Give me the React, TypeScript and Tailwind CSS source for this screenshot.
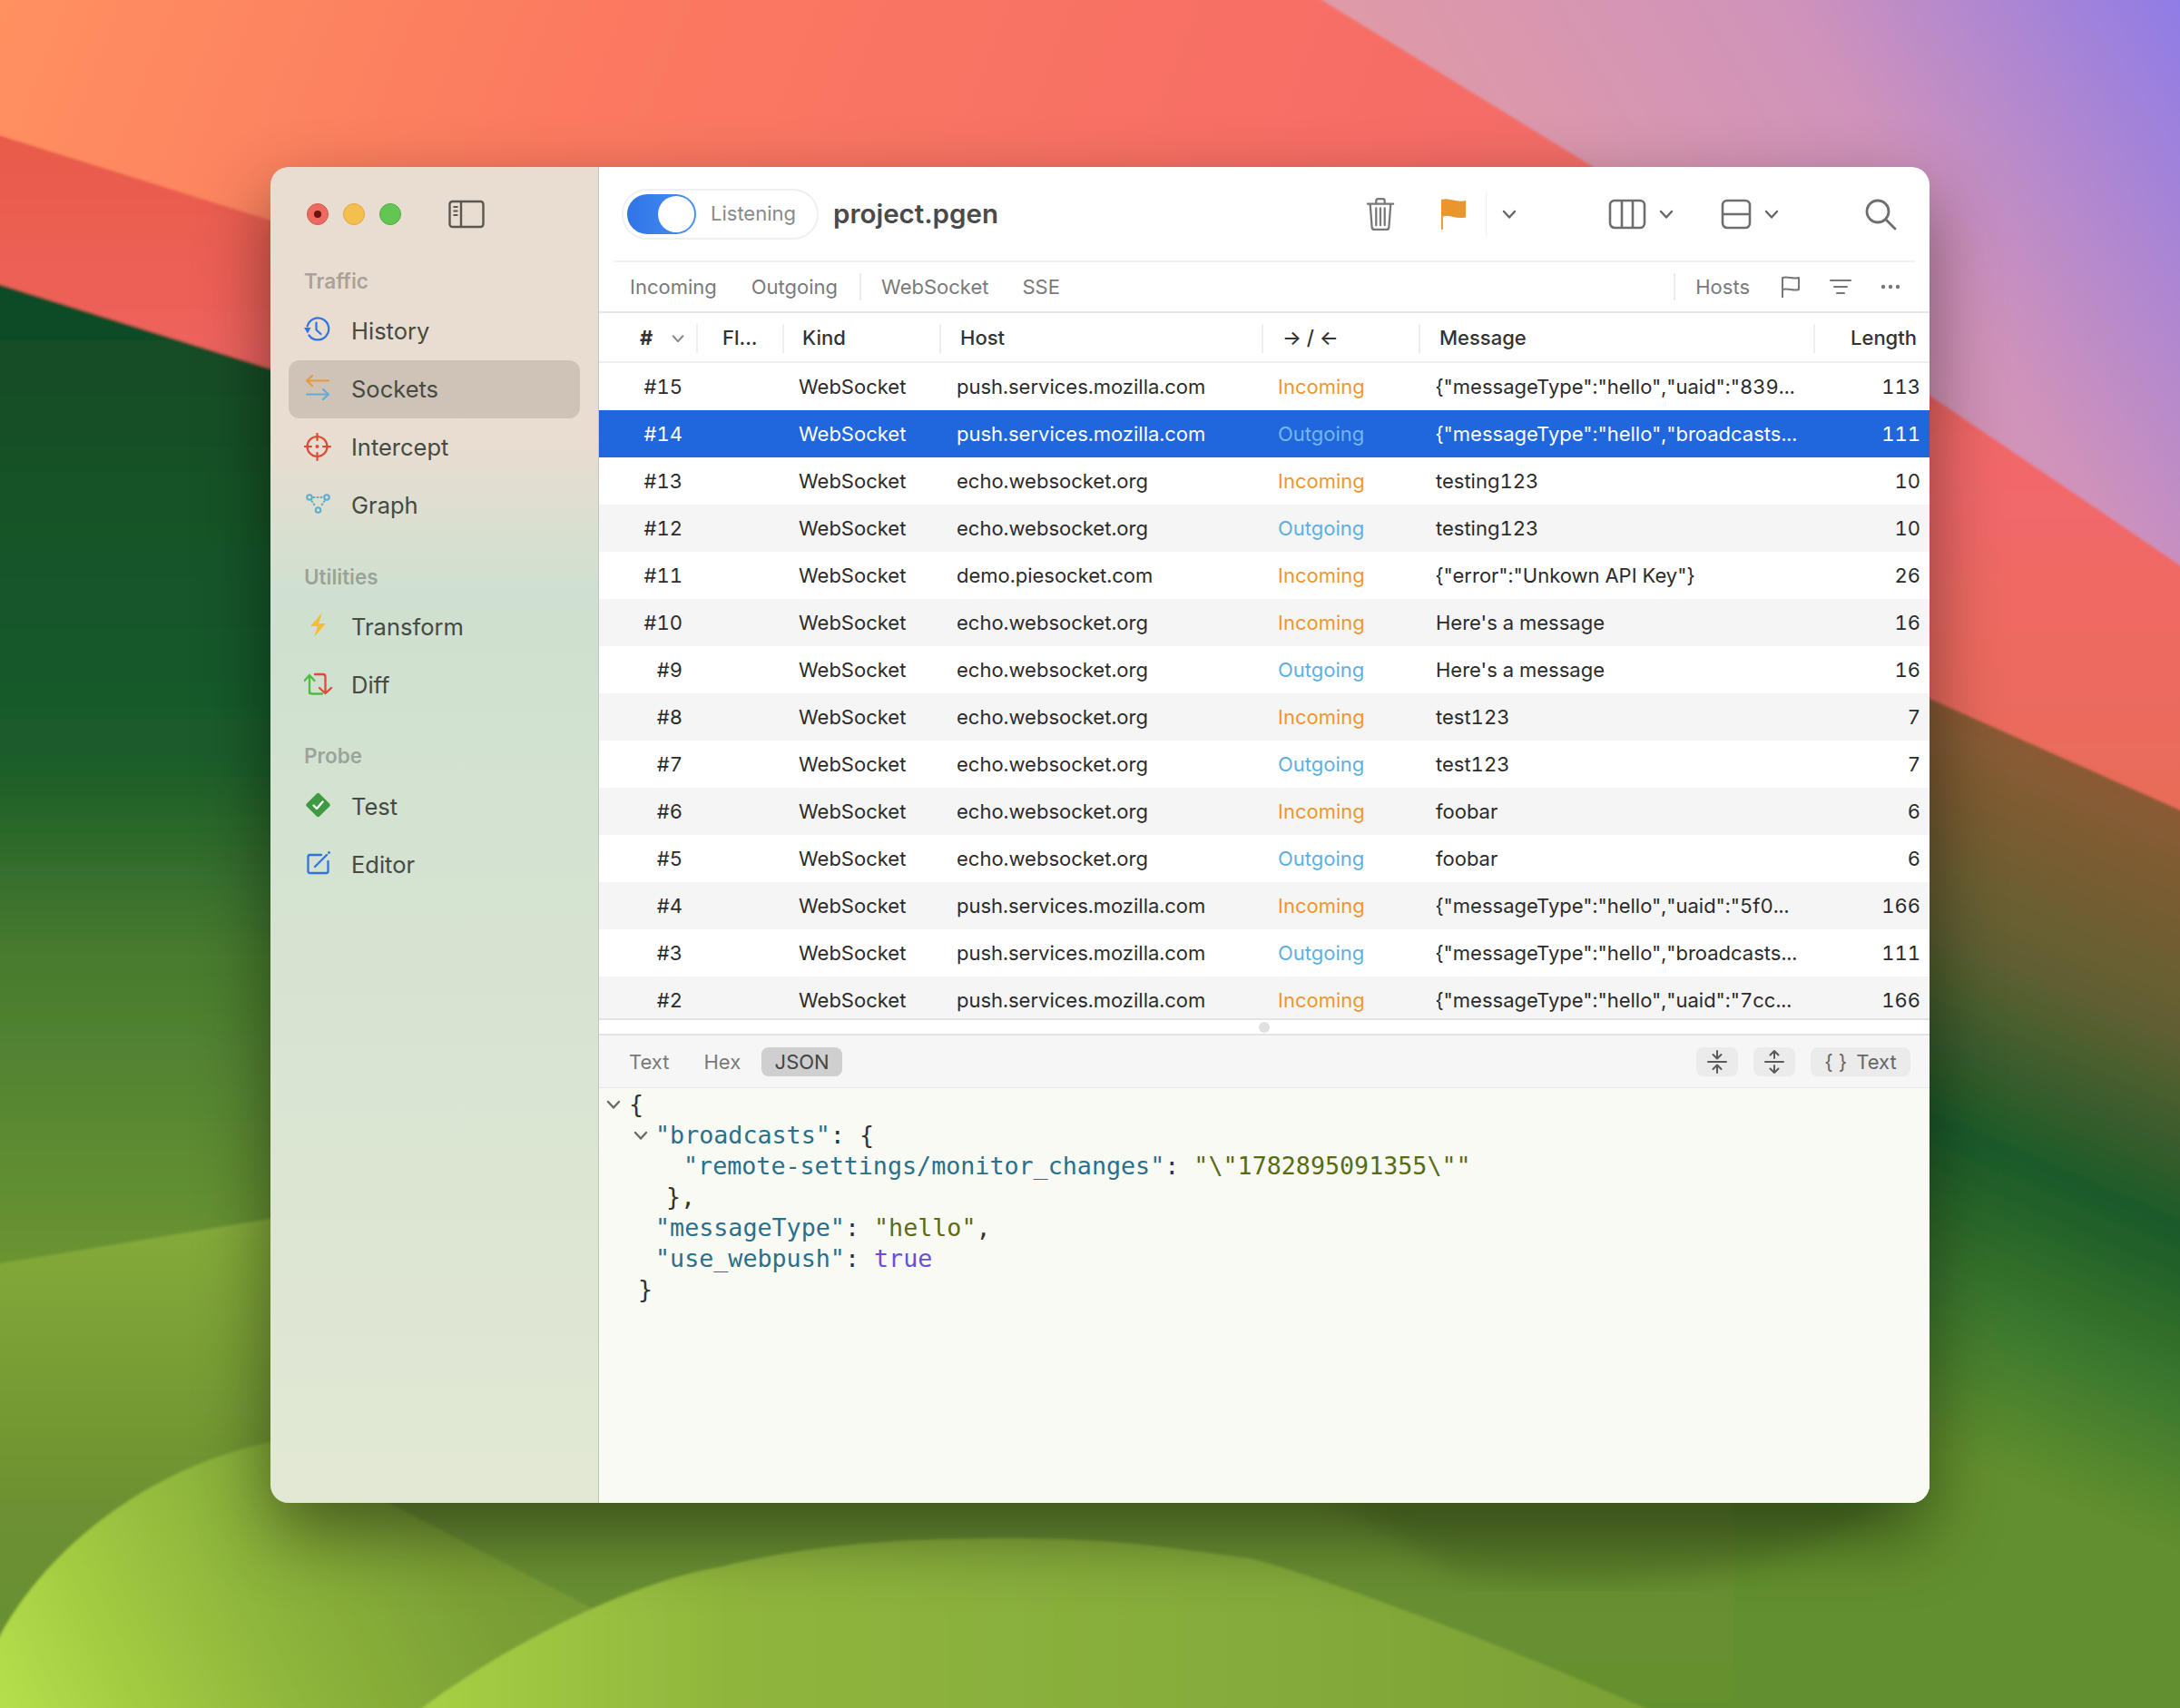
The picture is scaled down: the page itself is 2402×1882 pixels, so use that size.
import type { ReactNode } from "react"

const rows = [
  ["#15", "push.services.mozilla.com", "Incoming", '{"messageType":"hello","uaid":"839...', "113"],
  ["#14", "push.services.mozilla.com", "Outgoing", '{"messageType":"hello","broadcasts...', "111"],
  ["#13", "echo.websocket.org", "Incoming", "testing123", "10"],
  ["#12", "echo.websocket.org", "Outgoing", "testing123", "10"],
  ["#11", "demo.piesocket.com", "Incoming", '{"error":"Unkown API Key"}', "26"],
  ["#10", "echo.websocket.org", "Incoming", "Here's a message", "16"],
  ["#9", "echo.websocket.org", "Outgoing", "Here's a message", "16"],
  ["#8", "echo.websocket.org", "Incoming", "test123", "7"],
  ["#7", "echo.websocket.org", "Outgoing", "test123", "7"],
  ["#6", "echo.websocket.org", "Incoming", "foobar", "6"],
  ["#5", "echo.websocket.org", "Outgoing", "foobar", "6"],
  ["#4", "push.services.mozilla.com", "Incoming", '{"messageType":"hello","uaid":"5f0...', "166"],
  ["#3", "push.services.mozilla.com", "Outgoing", '{"messageType":"hello","broadcasts...', "111"],
  ["#2", "push.services.mozilla.com", "Incoming", '{"messageType":"hello","uaid":"7cc...', "166"],
]

function Wallpaper() {
  return (
    <svg className="absolute inset-0" width="2402" height="1882" viewBox="0 0 2402 1882">
      <defs>
        <linearGradient id="sky" x1="0" y1="0" x2="1" y2="0.3">
          <stop offset="0" stopColor="#ff9060" />
          <stop offset="0.25" stopColor="#fb7a60" />
          <stop offset="0.6" stopColor="#f66d66" />
          <stop offset="1" stopColor="#ec6a6c" />
        </linearGradient>
        <linearGradient id="pink" gradientUnits="userSpaceOnUse" x1="1700" y1="420" x2="2402" y2="0">
          <stop offset="0" stopColor="#e09aa6" />
          <stop offset="0.55" stopColor="#cf92ba" />
          <stop offset="1" stopColor="#8f7ce6" />
        </linearGradient>
        <linearGradient id="redBand" gradientUnits="userSpaceOnUse" x1="0" y1="150" x2="0" y2="890">
          <stop offset="0" stopColor="#e85a48" />
          <stop offset="0.5" stopColor="#f2686a" />
          <stop offset="1" stopColor="#e86c58" />
        </linearGradient>
        <linearGradient id="leftGreen" gradientUnits="userSpaceOnUse" x1="0" y1="312" x2="0" y2="1392">
          <stop offset="0" stopColor="#104a26" />
          <stop offset="0.48" stopColor="#1a5c2a" />
          <stop offset="0.68" stopColor="#477a2e" />
          <stop offset="1" stopColor="#6a9433" />
        </linearGradient>
        <linearGradient id="rightGreen" gradientUnits="userSpaceOnUse" x1="2250" y1="830" x2="1950" y2="1520">
          <stop offset="0" stopColor="#8a5a34" />
          <stop offset="0.3" stopColor="#5f5f30" />
          <stop offset="0.56" stopColor="#1b5a2a" />
          <stop offset="0.8" stopColor="#3f7a2d" />
          <stop offset="1" stopColor="#64902f" />
        </linearGradient>
        <linearGradient id="hillA" gradientUnits="userSpaceOnUse" x1="0" y1="1343" x2="0" y2="1882">
          <stop offset="0" stopColor="#85ab3a" />
          <stop offset="0.6" stopColor="#6c9030" />
          <stop offset="1" stopColor="#64902f" />
        </linearGradient>
        <linearGradient id="hillB" gradientUnits="userSpaceOnUse" x1="0" y1="1882" x2="800" y2="1500">
          <stop offset="0" stopColor="#b5e04c" />
          <stop offset="0.15" stopColor="#a4cc42" />
          <stop offset="0.35" stopColor="#8db43b" />
          <stop offset="0.6" stopColor="#7b9f35" />
          <stop offset="1" stopColor="#6e9130" />
        </linearGradient>
        <linearGradient id="hillC" gradientUnits="userSpaceOnUse" x1="455" y1="0" x2="1830" y2="0">
          <stop offset="0" stopColor="#a8d044" />
          <stop offset="0.25" stopColor="#90b53d" />
          <stop offset="0.7" stopColor="#84aa3a" />
          <stop offset="1" stopColor="#7aa035" />
        </linearGradient>
        <filter id="soft">
          <feGaussianBlur stdDeviation="1.500" />
        </filter>
        <filter id="softer">
          <feGaussianBlur stdDeviation="14" />
        </filter>
      </defs>
      <rect width="2402" height="1882" fill="url(#sky)" />
      <g filter="url(#soft)">
        <path d="M-5 148 L800 400 L2410 400 L2410 900 L-5 900 Z" fill="url(#redBand)" />
        <path d="M1448 -5 L1754 183 L2410 628 L2410 -5 Z" fill="url(#pink)" />
        <path d="M1900 669 L2410 896 L2410 1890 L1900 1890 Z" fill="url(#rightGreen)" />
        <path d="M-5 312 L310 410 L800 800 L800 1500 L-5 1500 Z" fill="url(#leftGreen)" />
        <path d="M-5 1393 L298 1343 L1910 1343 L1910 1890 L-5 1890 Z" fill="url(#hillA)" />
        <path d="M-5 1812 C40 1720 150 1620 298 1589 L900 1900 L-5 1900 Z" fill="url(#hillB)" />
      </g>
      <path d="M1463 1650 L1608 1735 C1800 1760 2000 1730 2080 1650 Z" fill="#4a6a24" opacity="0.45" filter="url(#softer)" />
      <path
        d="M455 1890 C530 1830 680 1745 796 1726 C900 1700 1000 1695 1118 1695 C1240 1695 1320 1710 1378 1717 C1480 1745 1700 1830 1830 1890 Z"
        fill="url(#hillC)"
        filter="url(#soft)"
      />
    </svg>
  )
}

function Ic({ children }: { children: ReactNode }) {
  return (
    <svg width={32} height={32} viewBox="0 0 32 32" fill="none" strokeLinecap="round" strokeLinejoin="round" className="shrink-0">
      {children}
    </svg>
  )
}

function NavIcon({ name }: { name: string }) {
  if (name === "History")
    return (
      <Ic>
        <g stroke="#2f74e0" strokeWidth="2.200">
          <path d="M3.600 10.500A12 12 0 1 1 5.500 20.500" />
          <path d="M13.500 6.500v8l5 4.500" />
        </g>
        <path d="M0 12h7.500L4 18.500Z" fill="#2f74e0" />
      </Ic>
    )
  if (name === "Sockets")
    return (
      <Ic>
        <path d="M27 6.500H3M9 1 3 6.500 9 12" stroke="#e8983e" strokeWidth="2.200" />
        <path d="M3 21.500h24M21 16l6 5.500-6 5.500" stroke="#62add8" strokeWidth="2.200" />
      </Ic>
    )
  if (name === "Intercept")
    return (
      <Ic>
        <g stroke="#df4a35" strokeWidth="2.200">
          <circle cx="14.500" cy="15" r="11" />
          <path d="M14.500 0v8M14.500 22v8M0 15h8M21 15h8" />
        </g>
        <circle cx="14.500" cy="15" r="2" fill="#df4a35" />
      </Ic>
    )
  if (name === "Graph")
    return (
      <Ic>
        <g stroke="#5cadc9" strokeWidth="2">
          <circle cx="6" cy="7" r="2.800" />
          <circle cx="25" cy="7" r="2.800" />
          <circle cx="15.500" cy="21" r="2.800" />
          <path d="M10.500 7h10M8.500 11l4 6M22.500 11l-4 6" strokeDasharray="1 3" />
        </g>
      </Ic>
    )
  if (name === "Transform")
    return (
      <Ic>
        <path d="M20 0 7 15h8l-4 12 13-15h-8l4-12Z" fill="#f5bd33" />
      </Ic>
    )
  if (name === "Diff")
    return (
      <Ic>
        <path d="M6 25V5M.5 11 6 5l5.500 6M6 22c0 2 1 3.500 3 3.500h11" stroke="#4fbb44" strokeWidth="2.300" />
        <path d="M12 4h9c2 0 2.500 1 2.500 3v17M17 19l6.500 6 6.500-6" stroke="#df4a35" strokeWidth="2.300" />
      </Ic>
    )
  if (name === "Test")
    return (
      <Ic>
        <rect x="5.500" y="4" width="20" height="20" rx="2.500" fill="#3e9a40" transform="rotate(45 15.500 14)" />
        <path d="m10.500 14.500 3.500 3.500 6.500-7.500" stroke="#fff" strokeWidth="2.400" />
      </Ic>
    )
  return (
    <Ic>
      <path d="M19 5H6.500a2 2 0 0 0-2 2v16a2 2 0 0 0 2 2h18a2 2 0 0 0 2-2V12" stroke="#2f74e0" strokeWidth="2.300" />
      <path d="m12 18 13-13" stroke="#2f74e0" strokeWidth="2.300" />
      <circle cx="27.500" cy="2.500" r="1.400" fill="#2f74e0" />
    </Ic>
  )
}

function NavItem({ label, active }: { label: string; active?: boolean }) {
  return (
    <div className={"flex items-center h-[64px] pl-[17px] rounded-[12px] " + (active ? "bg-[#cfc3b8]" : "")}>
      <div className="w-[52px] shrink-0">
        <NavIcon name={label} />
      </div>
      <span className="text-[25.500px] leading-none text-[#454a42]">{label}</span>
    </div>
  )
}

function SectionLabel({ children, cls }: { children: ReactNode; cls: string }) {
  return <div className={"pl-[17px] text-[22.500px] leading-none font-semibold text-[#3f3f3f]/40 " + cls}>{children}</div>
}

function Sidebar() {
  return (
    <aside className="w-[362px] shrink-0 flex flex-col bg-gradient-to-b from-[#e9ddd1] from-[20%] via-[#cfe0d0] via-[32%] to-[#e2e8d4] border-r border-[#bcc8b8] px-[20px]">
      <div className="flex items-center h-[104px] pl-[20px]">
        <span className="flex items-center justify-center w-[24px] h-[24px] rounded-full bg-[#ec6a5f] border border-[#d55a4e]">
          <span className="w-[8px] h-[8px] rounded-full bg-[#6e1410]" />
        </span>
        <span className="w-[24px] h-[24px] rounded-full bg-[#f5bf4f] border border-[#dfa93c] ml-[16px]" />
        <span className="w-[24px] h-[24px] rounded-full bg-[#62c554] border border-[#4fae43] ml-[16px]" />
        <svg width="40" height="32" viewBox="0 0 40 32" fill="none" className="ml-[52px]">
          <rect x="1.500" y="2" width="37" height="28" rx="3" stroke="#5a5650" strokeWidth="2.400" />
          <path d="M14 2v28" stroke="#5a5650" strokeWidth="2.400" />
          <path d="M5.500 8h5M5.500 12.500h5M5.500 17h5" stroke="#5a5650" strokeWidth="2" />
        </svg>
      </div>
      <SectionLabel cls="mt-[11px] mb-[11px]">Traffic</SectionLabel>
      <NavItem label="History" />
      <NavItem label="Sockets" active />
      <NavItem label="Intercept" />
      <NavItem label="Graph" />
      <SectionLabel cls="mt-[36px] mb-[12px]">Utilities</SectionLabel>
      <NavItem label="Transform" />
      <NavItem label="Diff" />
      <SectionLabel cls="mt-[35px] mb-[12px]">Probe</SectionLabel>
      <NavItem label="Test" />
      <NavItem label="Editor" />
    </aside>
  )
}

function Chevron({ color = "#666", size = 18, cls = "" }: { color?: string; size?: number; cls?: string }) {
  return (
    <svg width={size} height={size} viewBox="0 0 18 18" fill="none" className={cls}>
      <path d="m3 6 6 6.500L15 6" stroke={color} strokeWidth="2.400" strokeLinecap="round" strokeLinejoin="round" />
    </svg>
  )
}

function Toolbar() {
  return (
    <div className="relative h-[105px] shrink-0 flex items-center pl-[25px] pr-[36px] pb-[2px]">
      <div className="flex items-center w-[217px] h-[56px] rounded-full border-2 border-[#efefef] pl-[4px]">
        <div className="flex items-center justify-end w-[76px] h-[44px] rounded-full bg-gradient-to-r from-[#2f74e6] to-[#4a90f5] p-[2px]">
          <span className="w-[40px] h-[40px] rounded-full bg-white" />
        </div>
        <span className="ml-[16px] text-[22px] text-[#8a8a8a]">Listening</span>
      </div>
      <span className="ml-[16px] text-[29.500px] font-semibold text-[#4a4a4a]">project.pgen</span>
      <div className="ml-auto flex items-center">
        <svg width="32" height="38" viewBox="0 0 34 40" fill="none" stroke="#777" strokeWidth="2.400" strokeLinecap="round" strokeLinejoin="round">
          <path d="M2 8h30M12 8V4.500C12 3 13 2 14.500 2h5C21 2 22 3 22 4.500V8M5 8l2 27c.1 1.800 1.200 3 3 3h14c1.800 0 2.900-1.200 3-3l2-27M12 13v20M17 13v20M22 13v20" />
        </svg>
        <svg width="31" height="37" viewBox="0 0 32 38" fill="none" className="ml-[49px]">
          <path d="M2 3c10-3 17 4 28 1v19c-11 3-18-4-26-1v15H2Z" fill="#ea962e" />
        </svg>
        <span className="ml-[20px] w-[1px] h-[50px] bg-[#f0f0f0]" />
        <Chevron cls="ml-[16px]" />
        <svg width="42" height="36" viewBox="0 0 42 36" fill="none" stroke="#6e6e6e" strokeWidth="2.600" className="ml-[100px]">
          <rect x="2" y="3" width="38" height="30" rx="5" />
          <path d="M15 3v30M27 3v30" />
        </svg>
        <Chevron cls="ml-[13px]" />
        <svg width="34" height="36" viewBox="0 0 34 36" fill="none" stroke="#6e6e6e" strokeWidth="2.600" className="ml-[51px]">
          <rect x="2" y="3" width="30" height="30" rx="5" />
          <path d="M2 18h30" />
        </svg>
        <Chevron cls="ml-[13px]" />
        <svg width="36" height="36" viewBox="0 0 36 36" fill="none" stroke="#6e6e6e" strokeWidth="2.800" strokeLinecap="round" className="ml-[93px]">
          <circle cx="15" cy="15" r="12" />
          <path d="m24 24 10 10" />
        </svg>
      </div>
      <div className="absolute left-[16px] right-[16px] bottom-0 h-[2px] bg-[#f1f1f1]" />
    </div>
  )
}

function FilterBar() {
  return (
    <div className="h-[56px] shrink-0 flex items-center pl-[34px] pr-[32px] border-b-2 border-[#e7e7e7] text-[22px] text-[#7a7a7a]">
      <span>Incoming</span>
      <span className="ml-[38px]">Outgoing</span>
      <span className="ml-[24px] w-[2px] h-[30px] bg-[#ececec]" />
      <span className="ml-[22px]">WebSocket</span>
      <span className="ml-[37px]">SSE</span>
      <span className="ml-auto w-[2px] h-[30px] bg-[#ececec]" />
      <span className="ml-[22px]">Hosts</span>
      <svg width="22" height="26" viewBox="0 0 22 26" fill="none" stroke="#777" strokeWidth="2" strokeLinejoin="round" className="ml-[34px]">
        <path d="M2 25V3c6-2 12 2 18 0v13c-6 2-12-2-18 0" />
      </svg>
      <svg width="24" height="20" viewBox="0 0 24 20" fill="none" stroke="#777" strokeWidth="2" strokeLinecap="round" className="ml-[32px]">
        <path d="M1 3h22M5 10h14M8 17h8" />
      </svg>
      <svg width="22" height="6" viewBox="0 0 22 6" fill="#777" className="ml-[32px]">
        <circle cx="3" cy="3" r="2.200" />
        <circle cx="11" cy="3" r="2.200" />
        <circle cx="19" cy="3" r="2.200" />
      </svg>
    </div>
  )
}

function TableHeader() {
  return (
    <div className="h-[55px] shrink-0 flex items-center pt-[2px] border-b-2 border-[#eeeeee] text-[22px] font-medium text-[#333]">
      <div className="w-[109px] h-[32px] flex items-center pl-[45px] border-r-2 border-[#eeeeee]">
        <span className="font-bold">#</span>
        <Chevron color="#8a8a8a" size={16} cls="ml-[20px]" />
      </div>
      <div className="w-[95px] h-[32px] flex items-center pl-[27px] border-r-2 border-[#eeeeee]">Fl...</div>
      <div className="w-[173px] h-[32px] flex items-center pl-[20px] border-r-2 border-[#eeeeee]">Kind</div>
      <div className="w-[355px] h-[32px] flex items-center pl-[21px] border-r-2 border-[#eeeeee]">Host</div>
      <div className="w-[173px] h-[32px] flex items-center pl-[21px] border-r-2 border-[#eeeeee]">→ / ←</div>
      <div className="w-[435px] h-[32px] flex items-center pl-[21px] border-r-2 border-[#eeeeee]">Message</div>
      <div className="flex-1 text-right pr-[14px]">Length</div>
    </div>
  )
}

function Row({ row, index }: { row: string[]; index: number }) {
  const [id, host, dir, msg, len] = row
  const selected = id === "#14"
  const bg = selected ? "bg-[#2067dd] text-white" : index % 2 === 1 ? "bg-[#f5f5f5] text-[#2b2b2b]" : "bg-white text-[#2b2b2b]"
  const dirColor = selected ? "text-[#74b8f2]" : dir === "Incoming" ? "text-[#f0962e]" : "text-[#5cb0e2]"
  return (
    <div className={"h-[52px] shrink-0 flex items-center text-[22px] tabular-nums " + bg}>
      <div className="w-[92px] text-right">{id}</div>
      <div className="w-[128px]" />
      <div className="w-[174px]">WebSocket</div>
      <div className="w-[354px]">{host}</div>
      <div className={"w-[174px] " + dirColor}>{dir}</div>
      <div className="w-[460px] whitespace-nowrap">{msg}</div>
      <div className="flex-1 text-right pr-[10px]">{len}</div>
    </div>
  )
}

function JsonView() {
  const key = "text-[#2a6f8c]"
  const str = "text-[#5b6b12]"
  return (
    <div className="flex-1 bg-[#f9faf3] pt-[1px] font-['DejaVu_Sans_Mono',monospace] text-[26.700px] leading-[34px] text-[#333] whitespace-pre">
      <div className="flex items-center h-[34px] pl-[7px]">
        <Chevron color="#6a6a6a" size={18} />
        <span className="ml-[8px]">{"{"}</span>
      </div>
      <div className="flex items-center h-[34px] pl-[37px]">
        <Chevron color="#6a6a6a" size={18} />
        <span className="ml-[7px]">
          <span className={key}>"broadcasts"</span>: {"{"}
        </span>
      </div>
      <div className="h-[34px] pl-[93px]">
        <span className={key}>"remote-settings/monitor_changes"</span>: <span className={str}>"\"1782895091355\""</span>
      </div>
      <div className="h-[34px] pl-[74px]">{"},"}</div>
      <div className="h-[34px] pl-[62px]">
        <span className={key}>"messageType"</span>: <span className={str}>"hello"</span>,
      </div>
      <div className="h-[34px] pl-[62px]">
        <span className={key}>"use_webpush"</span>: <span className="text-[#6a4fd4]">true</span>
      </div>
      <div className="h-[34px] pl-[43px]">{"}"}</div>
    </div>
  )
}

function DetailBar() {
  return (
    <div className="h-[58px] shrink-0 flex items-center pt-[1px] pl-[33px] pr-[21px] bg-[#f6f6f6] border-b border-[#e9e9e9] text-[22px] text-[#7a7a7a]">
      <span>Text</span>
      <span className="ml-[38px]">Hex</span>
      <span className="ml-[23px] w-[89px] h-[32px] flex items-center justify-center rounded-[8px] bg-[#cfcfcf] text-[#444]">JSON</span>
      <div className="ml-auto flex items-center">
        <div className="w-[46px] h-[32px] flex items-center justify-center rounded-[8px] bg-[#ebebeb]">
          <svg width="22" height="26" viewBox="0 0 22 26" fill="none" stroke="#5a5a5a" strokeWidth="2" strokeLinecap="round" strokeLinejoin="round">
            <path d="M1 13h20M11 1v8M6.500 5 11 9.500 15.500 5M11 25v-8M6.500 21 11 16.500 15.500 21" />
          </svg>
        </div>
        <div className="ml-[17px] w-[46px] h-[32px] flex items-center justify-center rounded-[8px] bg-[#ebebeb]">
          <svg width="22" height="26" viewBox="0 0 22 26" fill="none" stroke="#5a5a5a" strokeWidth="2" strokeLinecap="round" strokeLinejoin="round">
            <path d="M1 13h20M11 9V1M6.500 5.500 11 1l4.500 4.500M11 17v8M6.500 20.500 11 25l4.500-4.500" />
          </svg>
        </div>
        <div className="ml-[17px] w-[110px] h-[32px] flex items-center justify-center rounded-[8px] bg-[#ebebeb] text-[#666]">
          <span className="mr-[10px]">{"{ }"}</span>Text
        </div>
      </div>
    </div>
  )
}

export default function App() {
  return (
    <div className="relative w-full h-[1882px] overflow-hidden font-['Inter',sans-serif] pl-[298px] pt-[184px]">
      <Wallpaper />
      <div className="relative flex w-[1828px] h-[1472px] rounded-[20px] overflow-hidden shadow-[0_34px_80px_rgba(0,0,0,0.45)]">
        <Sidebar />
        <main className="flex-1 min-w-0 flex flex-col bg-white">
          <Toolbar />
          <FilterBar />
          <TableHeader />
          <div className="h-[722px] shrink-0 flex flex-col overflow-hidden">
            {rows.map((r, i) => (
              <Row key={r[0]} row={r} index={i} />
            ))}
          </div>
          <div className="h-[19px] shrink-0 flex items-center justify-center border-y-2 border-[#e3e3e3] bg-white">
            <span className="w-[12px] h-[12px] rounded-full bg-[#e0e0e0]" />
          </div>
          <DetailBar />
          <JsonView />
        </main>
      </div>
    </div>
  )
}
